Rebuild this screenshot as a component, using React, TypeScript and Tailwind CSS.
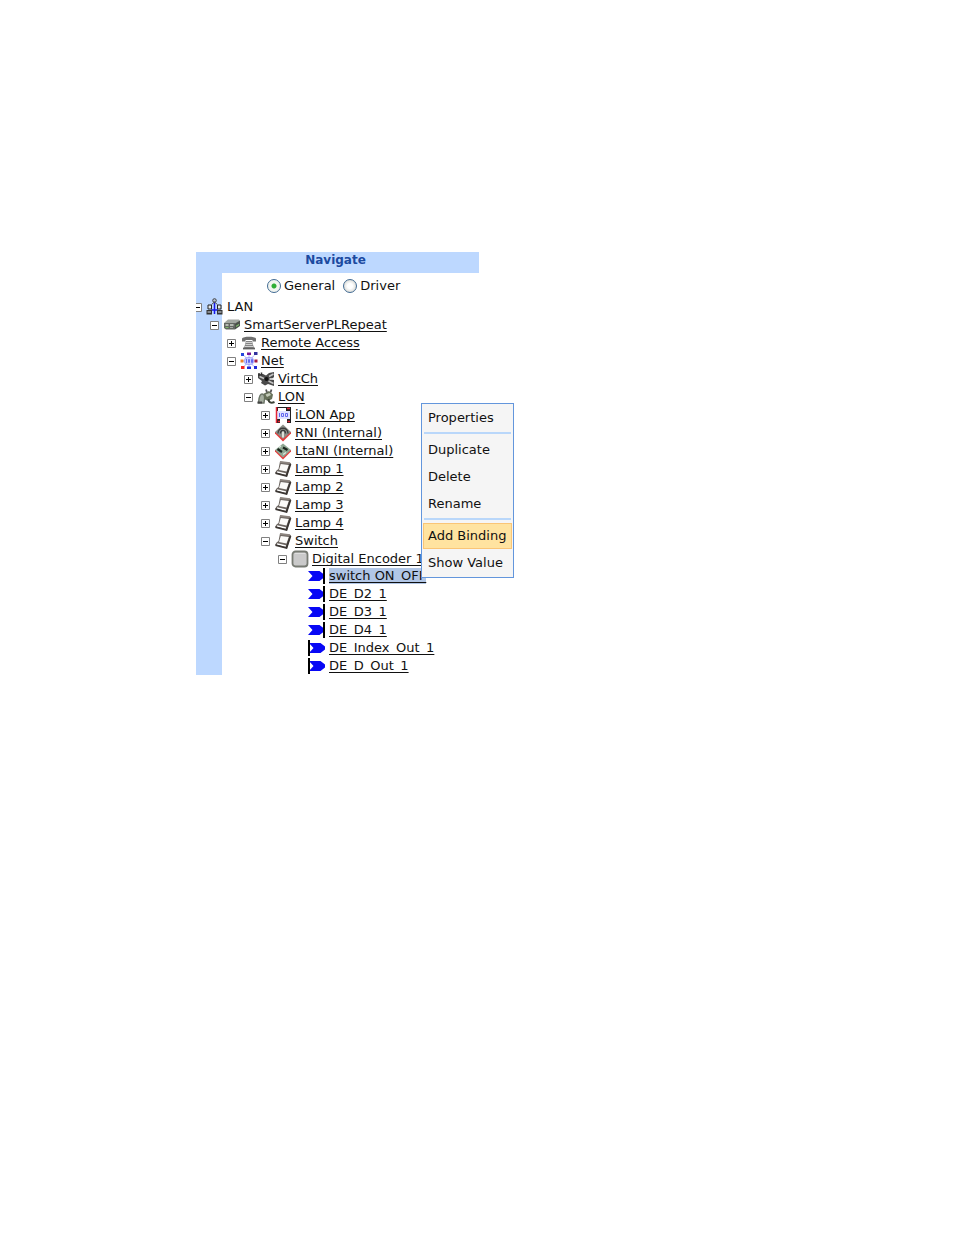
import { useState } from "react";
import type { ReactNode } from "react";

type IconName =
  | "lan" | "server" | "phone" | "net" | "virtual" | "plug"
  | "app" | "rni" | "lta" | "device" | "block" | "input" | "output";

type TreeNode = {
  label: string;
  icon: IconName;
  open?: boolean;
  leaf?: boolean;
  plain?: boolean;
  selected?: boolean;
  children?: TreeNode[];
};

const tree: TreeNode = {
  label: "LAN", icon: "lan", open: true, plain: true,
  children: [
    {
      label: "SmartServerPLRepeat", icon: "server", open: true,
      children: [
        { label: "Remote Access", icon: "phone" },
        {
          label: "Net", icon: "net", open: true,
          children: [
            { label: "VirtCh", icon: "virtual" },
            {
              label: "LON", icon: "plug", open: true,
              children: [
                { label: "iLON App", icon: "app" },
                { label: "RNI (Internal)", icon: "rni" },
                { label: "LtaNI (Internal)", icon: "lta" },
                { label: "Lamp 1", icon: "device" },
                { label: "Lamp 2", icon: "device" },
                { label: "Lamp 3", icon: "device" },
                { label: "Lamp 4", icon: "device" },
                {
                  label: "Switch", icon: "device", open: true,
                  children: [
                    {
                      label: "Digital Encoder 1", icon: "block", open: true,
                      children: [
                        { label: "switch ON_OFF", icon: "input", leaf: true, selected: true },
                        { label: "DE_D2_1", icon: "input", leaf: true },
                        { label: "DE_D3_1", icon: "input", leaf: true },
                        { label: "DE_D4_1", icon: "input", leaf: true },
                        { label: "DE_Index_Out_1", icon: "output", leaf: true },
                        { label: "DE_D_Out_1", icon: "output", leaf: true },
                      ],
                    },
                  ],
                },
              ],
            },
          ],
        },
      ],
    },
  ],
};

const drawings: Record<IconName, ReactNode> = {
  lan: (
    <>
      <path d="M8.500 4v12M5 12h7" stroke="#1616e8" strokeWidth="1.500" />
      <circle cx="8.500" cy="2.500" r="1.800" fill="#b8c4d8" stroke="#444" />
      <path d="M5.500 6.500 8.500 4l3 2.500" fill="none" stroke="#555" />
      <path d="M2 7h3.500v4H2zM11.500 7H15v4h-3.500z" fill="#e2e6ea" stroke="#222" />
      <path d="M.5 12H6v4.500H.5zM11 12h5.500v4.500H11z" fill="#333" />
      <path d="M1.500 14H5M12 14h3.500" stroke="#d9e2ee" />
    </>
  ),
  server: (
    <>
      <path d="M1 7 5 3.500h11l1 1.500-5 3z" fill="#a3a8a3" />
      <path d="M1 7h11v6.500H3L1 12z" fill="#626762" />
      <path d="m12 7.500 5-3V10l-5 3.500z" fill="#4b504b" />
      <path d="M2.500 9h3M7 9h3.500" stroke="#d2d8d0" strokeWidth="1.500" />
      <path d="M2.500 11.500h3M13 10.500l3-2" stroke="#7fbb6d" strokeWidth="1.200" />
      <path d="M7 11.500h3" stroke="#a5a9a5" />
    </>
  ),
  phone: (
    <>
      <path d="M2 4.500C3 2 15 2 16 4.500V7.500h-3.500V6h-7v1.500H2z" fill="#707070" />
      <path d="M6 7h6l2 7H4z" fill="#858585" />
      <path d="M6 8.500h6M5.500 10.500h7M5 12.500h8" stroke="#d0d0d0" />
      <path d="M3 14.500h12" stroke="#606060" strokeWidth="1.800" />
    </>
  ),
  net: (
    <>
      <path d="M4 3.500l10 11M14 3.500 4 14.500M9 1v16M2 9h14" stroke="#a9adff" />
      <rect x="4.500" y="5.500" width="9" height="7" rx="3" fill="#c9ceff" stroke="#a0a5fa" />
      <path d="M6.500 7v4M8.500 7.500h1v3h-1zM11.500 7.500h1v3h-1z" fill="none" stroke="#6468f0" />
      <path d="M1 1h3v3H1z" fill="#2244dd" />
      <path d="M7 .5h4V3H7z" fill="#7a1596" />
      <path d="M14 0h3.500v3H14z" fill="#31319e" />
      <path d="M.5 7.500h3v3h-3z" fill="#f0822c" />
      <path d="M14.500 7.500h3v3h-3z" fill="#a71c42" />
      <path d="M1 14h3.500v3H1z" fill="#f32424" />
      <path d="M7 14.500h4V17H7zM14 14h3v3h-3z" fill="#2029d8" />
    </>
  ),
  virtual: (
    <>
      <path d="M1 4h5l3 1.500L12 3l5-1v5l-2 2 2 1v6l-3-1-3-1-3 1.500L4 13l1-2-4-3z" fill="#4a4a4a" />
      <path d="M2 3v3M4.500 2.500v3" stroke="#333" strokeWidth="1.500" />
      <path d="M2.500 6.500 7 8.500M12 6.500 16.500 4M11.500 11l5 2.500" fill="none" stroke="#c3c3c3" strokeWidth="1.500" />
      <path d="M12.500 9H17" stroke="#eee" strokeWidth="1.500" />
      <circle cx="9.500" cy="9" r="2" fill="#111" />
    </>
  ),
  plug: (
    <>
      <path d="M1.500 15C2 11 2 6 5 6s3 4 2 9z" fill="#a5aea0" stroke="#6d7669" strokeWidth="1.400" />
      <path d="M.5 14.500H5" stroke="#444" strokeWidth="2" />
      <path d="M7 5.500 12 3l4 3.500-1 4.500-4 2-4-2z" fill="#667059" />
      <path d="m8.500 6.500 4-1.500 1.500 2-4 2z" fill="#c2cab8" />
      <path d="m10 4.500-1-3M13.500 4.500l1-3" stroke="#555" strokeWidth="1.800" />
      <path d="M11.500 11c0 3.500 2.500 4.500 6 3" fill="none" stroke="#3d4337" strokeWidth="2" />
    </>
  ),
  app: (
    <>
      <path d="M2 1h15v16H2z" fill="#202020" />
      <path d="M4 2h8v3H4zM6 13h7v4H6z" fill="#fff" />
      <path d="M3 5h13v8H3z" fill="#dfe2ff" />
      <path d="M5.500 7v4M7.500 7.500h2v3h-2zM11.500 7.500h2v3h-2z" fill="none" stroke="#6267f0" />
      <path d="M2.500 1v16M13 2.500h3M4 15.500h2M13.500 15.500H16" stroke="#e52535" strokeWidth="1.500" />
    </>
  ),
  rni: (
    <>
      <path d="M1 9.500 9 17.500l8-8V8H1z" fill="#e43c3c" />
      <path d="m1 8 8-7.500L17 8l-8 7z" fill="#8b8f88" />
      <path d="M4 9.500c0-7 10-7 10 0M6.500 9.500c0-4 5-4 5 0" fill="none" stroke="#3b3b3b" strokeWidth="1.300" />
      <path d="M9 7.500v6" stroke="#e8e9e3" strokeWidth="1.800" />
    </>
  ),
  lta: (
    <>
      <path d="M1 9.500 9 17.500l8-8V8H1z" fill="#e43c3c" />
      <path d="m1 8 8-6.500L17 8l-8 7.500z" fill="#8fa793" />
      <path d="m3.500 7 4.500 3M9 5.500l4.500 2.500" stroke="#1c261e" strokeWidth="2.200" />
      <path d="m5 5.500 2-1.500M9 12.500l3-2" stroke="#dbe6dc" strokeWidth="1.300" />
    </>
  ),
  device: (
    <>
      <path d="M6 1.500 17 3l-4 13.500L1 13l1.500-2.500L4.500 9z" fill="#6b645f" />
      <path d="m6.800 4 8 1-2.300 6.500-7.500-1.500z" fill="#fbfaf8" />
      <path d="m6 2 10 1.200" stroke="#8d857f" strokeWidth="1.800" />
      <path d="m3.200 11.300 8.800 2-.4 1.400-8.800-2z" fill="#fff" />
      <path d="m1.500 13.200 11 2.800L16.500 4" fill="none" stroke="#3a3532" strokeWidth="1.800" />
    </>
  ),
  block: (
    <>
      <rect x="1.500" y="1.500" width="15" height="15" rx="3" fill="#cacaca" stroke="#777b73" strokeWidth="1.800" />
      <path d="M4 3.500h10" stroke="#dedede" />
    </>
  ),
  input: (
    <>
      <path d="M0 4h11.500L16 7.500v3L11.500 14H0l4.500-5z" fill="#0707f5" />
      <path d="M16 1v16" stroke="#000" strokeWidth="2" />
    </>
  ),
  output: (
    <>
      <path d="M1 4h11.500L17 7.500v3L12.500 14H1l4.500-5z" fill="#0707f5" />
      <path d="M1 1v16" stroke="#000" strokeWidth="2" />
    </>
  ),
};

function Toggle({ open, label, onClick }: { open: boolean; label: string; onClick: () => void }) {
  return (
    <button type="button" aria-label={label} aria-expanded={open} onClick={onClick} className="size-[9px] shrink-0">
      <svg viewBox="0 0 9 9" className="block size-[9px]">
        <path d="M.5.5h8v8h-8z" fill="#fff" stroke="#808080" />
        <path d={open ? "M2 4.500h5" : "M2 4.500h5M4.500 2v5"} stroke="#000" />
      </svg>
    </button>
  );
}

function Branch({ node }: { node: TreeNode }) {
  const [open, setOpen] = useState(Boolean(node.open));
  return (
    <li>
      <div className="flex h-[18px] items-center whitespace-nowrap">
        {node.leaf ? (
          <span className="w-[9px] shrink-0" />
        ) : (
          <Toggle open={open} label={`Toggle ${node.label}`} onClick={() => setOpen(!open)} />
        )}
        <svg viewBox="0 0 18 18" aria-hidden="true" className="ml-1 mr-[3px] size-[18px] shrink-0">
          {drawings[node.icon]}
        </svg>
        {node.plain ? (
          <span>{node.label}</span>
        ) : (
          <a
            href="#"
            className={
              node.selected
                ? "bg-[#b1c6e6] underline underline-offset-2 [text-decoration-skip-ink:none]"
                : "underline underline-offset-2 [text-decoration-skip-ink:none]"
            }
          >
            {node.label}
          </a>
        )}
      </div>
      {open && node.children && (
        <ul className={node.children[0].leaf ? "-mt-px pl-[17px]" : "pl-[17px]"}>
          {node.children.map((child) => (
            <Branch key={child.label} node={child} />
          ))}
        </ul>
      )}
    </li>
  );
}

const menuGroups = [["Properties"], ["Duplicate", "Delete", "Rename"], ["Add Binding", "Show Value"]];

function ContextMenu() {
  return (
    <div role="menu" className="absolute left-[225px] top-[151px] w-[93px] border border-[#6396dc] bg-[#f5f5f5] p-px">
      {menuGroups.map((group, index) => (
        <div
          key={group[0]}
          className={index > 0 ? "mt-px flex flex-col gap-px" : "flex flex-col gap-px"}
        >
          {index > 0 && <hr className="mx-px mb-0.5 h-0.5 border-0 bg-[#b9d7fa]" />}
          {group.map((item) => (
            <button
              key={item}
              type="button"
              role="menuitem"
              className={
                item === "Add Binding"
                  ? "h-[26px] whitespace-nowrap border border-[#fac576] bg-[#ffe3a0] px-1 text-left"
                  : "h-[26px] whitespace-nowrap border border-transparent px-1 text-left"
              }
            >
              {item}
            </button>
          ))}
        </div>
      ))}
    </div>
  );
}

function ViewOption({ label, checked, onChange }: { label: string; checked: boolean; onChange: () => void }) {
  return (
    <label className="flex items-center gap-[3px]">
      <input
        type="radio"
        name="view"
        checked={checked}
        onChange={onChange}
        className="size-[14px] appearance-none rounded-full border border-[#426b93] bg-[radial-gradient(circle,#fff_30%,#dcdcd7_75%)] checked:bg-[radial-gradient(circle,#2fae35_0_2px,#f2f5f0_3px)]"
      />
      {label}
    </label>
  );
}

export default function App() {
  const [view, setView] = useState("General");
  return (
    <main className="bg-white pb-16 pl-[196px] pt-[252px] font-['DejaVu_Sans',sans-serif] text-[13px] leading-4 text-[#111]">
      <section className="relative w-full max-w-[283px] bg-[linear-gradient(to_right,#bdd8ff_26px,transparent_26px)]">
        <h1 className="h-[21px] bg-[#bdd8ff] pr-1 text-center text-[12px] font-bold leading-4 text-[#1c4a9f]">Navigate</h1>
        <div className="flex h-[25px] items-center gap-2 pl-[71px]">
          {["General", "Driver"].map((option) => (
            <ViewOption key={option} label={option} checked={view === option} onChange={() => setView(option)} />
          ))}
        </div>
        <nav aria-label="Network tree" className="overflow-hidden">
          <ul className="-ml-[3px]">
            <Branch node={tree} />
          </ul>
        </nav>
        <ContextMenu />
      </section>
    </main>
  );
}
